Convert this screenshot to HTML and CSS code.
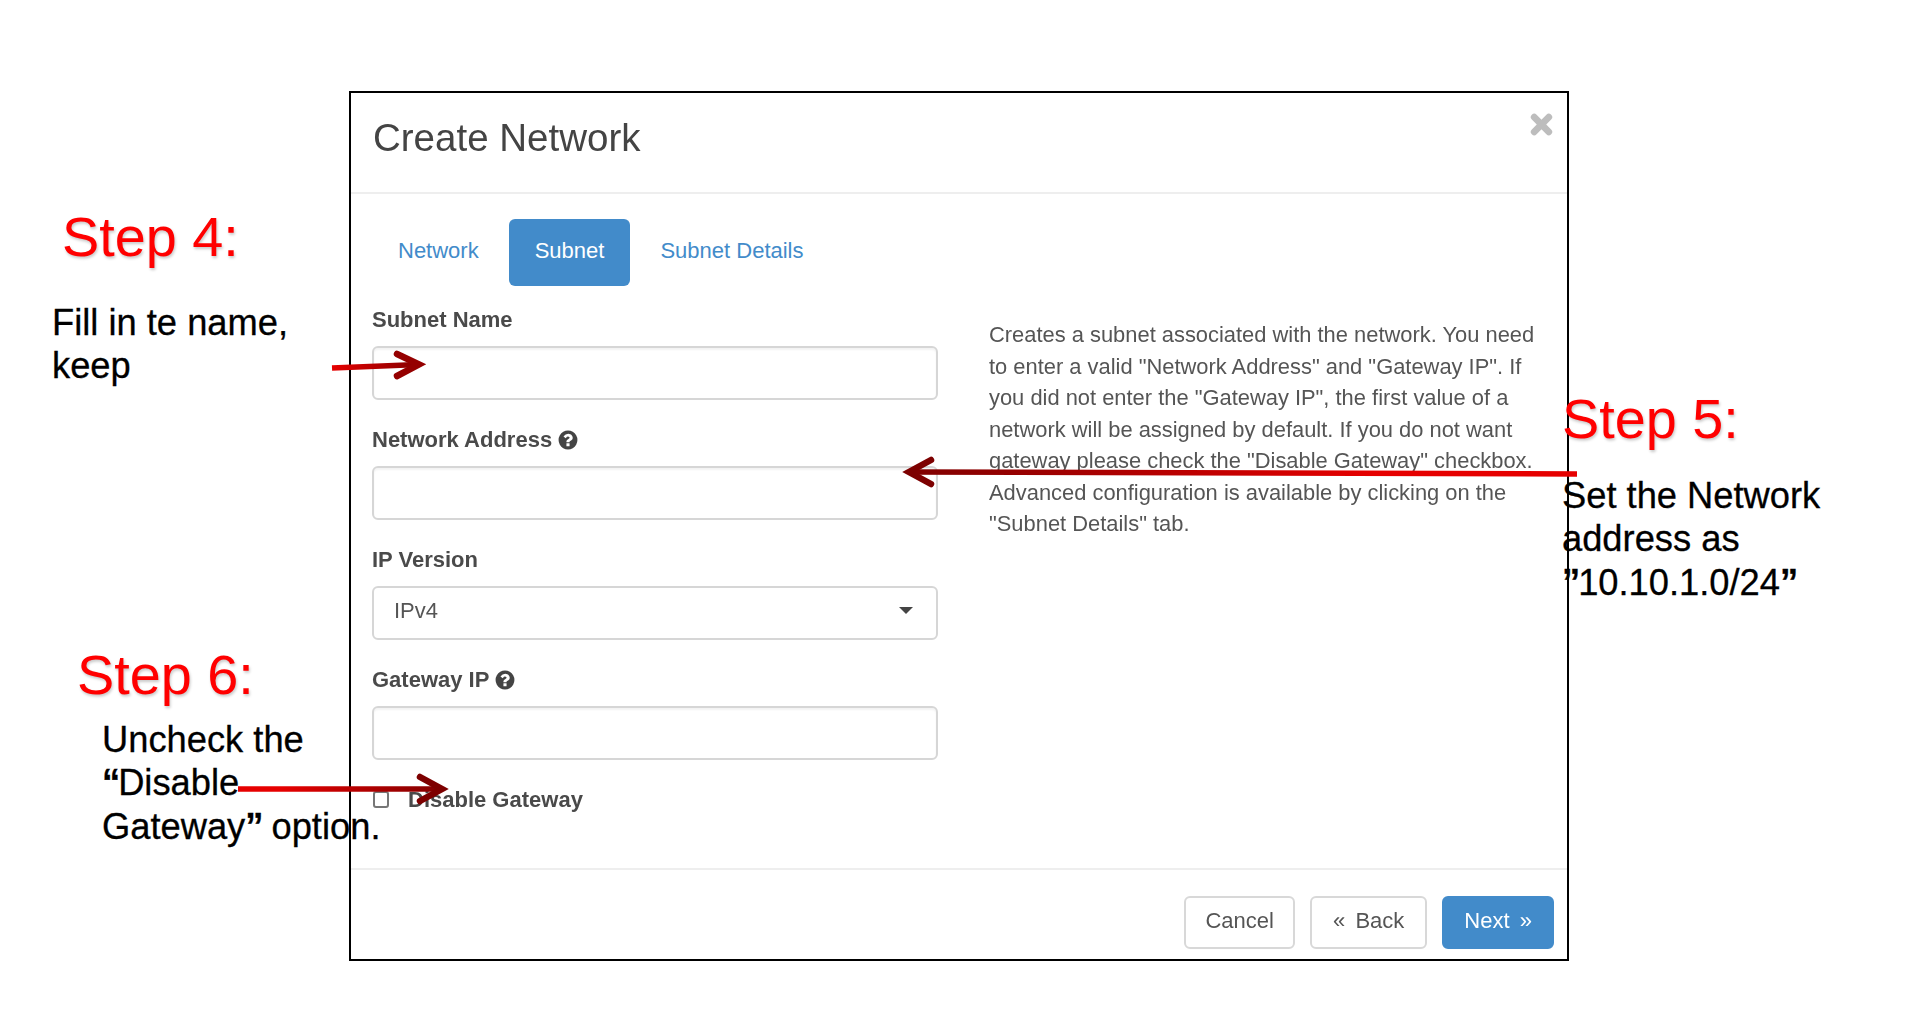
FILE: index.html
```html
<!DOCTYPE html>
<html lang="en">
<head>
<meta charset="utf-8">
<title>Create Network</title>
<link rel="stylesheet" href="styles.css">
</head>
<body>
<main class="stage">
  <section class="modal">
    <header class="modal-header">
      <h1 class="modal-title">Create Network</h1>
      <svg class="close-icon" viewBox="0 0 24 24" aria-hidden="true"><path d="M5 5 19 19M19 5 5 19"/></svg>
    </header>
    <div class="modal-body">
      <nav class="tabs">
        <a class="tab">Network</a>
        <a class="tab tab-active">Subnet</a>
        <a class="tab">Subnet Details</a>
      </nav>
      <div class="form-grid">
        <form class="fields">
          <div class="field">
            <label class="field-label">Subnet Name</label>
            <input class="control" type="text">
          </div>
          <div class="field">
            <label class="field-label">Network Address
              <svg class="help-icon" viewBox="0 0 1792 1792" aria-hidden="true"><path d="M1024 1376v-192q0-14-9-23t-23-9h-192q-14 0-23 9t-9 23v192q0 14 9 23t23 9h192q14 0 23-9t9-23zm256-672q0-88-55.5-163t-138.5-116-170-41q-243 0-371 213-15 24 8 42l132 100q7 6 19 6 16 0 25-12 53-68 86-92 34-24 86-24 48 0 85.5 26t37.5 59q0 38-20 61t-68 45q-63 28-115.5 86.5t-52.5 125.5v36q0 14 9 23t23 9h192q14 0 23-9t9-23q0-19 21.5-49.5t54.5-49.5q32-18 49-28.5t46-35 44.5-48 28-60.5 12.5-81zm384 192q0 209-103 385.5t-279.5 279.5-385.5 103-385.5-103-279.5-279.5-103-385.5 103-385.5 279.5-279.5 385.5-103 385.5 103 279.5 279.5 103 385.5z"/></svg>
            </label>
            <input class="control" type="text">
          </div>
          <div class="field">
            <label class="field-label">IP Version</label>
            <div class="select-wrap">
              <select class="control control-select"><option>IPv4</option></select>
              <span class="caret"></span>
            </div>
          </div>
          <div class="field">
            <label class="field-label">Gateway IP
              <svg class="help-icon" viewBox="0 0 1792 1792" aria-hidden="true"><path d="M1024 1376v-192q0-14-9-23t-23-9h-192q-14 0-23 9t-9 23v192q0 14 9 23t23 9h192q14 0 23-9t9-23zm256-672q0-88-55.5-163t-138.5-116-170-41q-243 0-371 213-15 24 8 42l132 100q7 6 19 6 16 0 25-12 53-68 86-92 34-24 86-24 48 0 85.5 26t37.5 59q0 38-20 61t-68 45q-63 28-115.5 86.5t-52.5 125.5v36q0 14 9 23t23 9h192q14 0 23-9t9-23q0-19 21.5-49.5t54.5-49.5q32-18 49-28.5t46-35 44.5-48 28-60.5 12.5-81zm384 192q0 209-103 385.5t-279.5 279.5-385.5 103-385.5-103-279.5-279.5-103-385.5 103-385.5 279.5-279.5 385.5-103 385.5 103 279.5 279.5 103 385.5z"/></svg>
            </label>
            <input class="control" type="text">
          </div>
          <label class="check-row">
            <span class="check-box"></span>
            <span>Disable Gateway</span>
          </label>
        </form>
        <p class="description">Creates a subnet associated with the network. You need to enter a valid "Network Address" and "Gateway IP". If you did not enter the "Gateway IP", the first value of a network will be assigned by default. If you do not want gateway please check the "Disable Gateway" checkbox. Advanced configuration is available by clicking on the "Subnet Details" tab.</p>
      </div>
    </div>
    <footer class="modal-footer">
      <button class="btn btn-cancel" type="button">Cancel</button>
      <button class="btn btn-back" type="button">«&nbsp; Back</button>
      <button class="btn btn-primary" type="button">Next &nbsp;»</button>
    </footer>
  </section>

  <div class="note note-4">
    <h2 class="step-title">Step 4:</h2>
    <p class="step-text">Fill in te name,<br>keep</p>
  </div>
  <div class="note note-5">
    <h2 class="step-title">Step 5:</h2>
    <p class="step-text">Set the Network<br>address as<br><b>”</b>10.10.1.0/24<b>”</b></p>
  </div>
  <h2 class="step-title note note-6-title">Step 6:</h2>
  <p class="step-text note note-6-text">Uncheck the<br><b>“</b>Disable<br>Gateway<b>”</b> option.</p>

  <svg class="arrows" viewBox="0 0 1917 1010" aria-hidden="true">
    <defs>
      <linearGradient id="toRight1" gradientUnits="userSpaceOnUse" x1="332" y1="0" x2="426" y2="0"><stop offset="0" stop-color="#e60000"/><stop offset="1" stop-color="#7d0000"/></linearGradient>
      <linearGradient id="toLeft" gradientUnits="userSpaceOnUse" x1="1577" y1="0" x2="902" y2="0"><stop offset="0.3" stop-color="#e60000"/><stop offset="1" stop-color="#7d0000"/></linearGradient>
      <linearGradient id="toRight2" gradientUnits="userSpaceOnUse" x1="238" y1="0" x2="449" y2="0"><stop offset="0.2" stop-color="#e60000"/><stop offset="1" stop-color="#7d0000"/></linearGradient>
    </defs>
    <path class="arrow-line" stroke="url(#toRight1)" d="M332 368 419 364.5"/>
    <path class="arrow-head" stroke="#950000" d="M397 354 419 364.5 397 376"/>
    <path class="arrow-line" stroke="url(#toLeft)" d="M1577 474 909 472"/>
    <path class="arrow-head" stroke="#7d0000" d="M931 460 909 472 931 484"/>
    <path class="arrow-line" stroke="url(#toRight2)" d="M238 789 441 789"/>
    <path class="arrow-head" stroke="#7d0000" d="M420 777 442 789 420 801"/>
  </svg>
</main>
</body>
</html>
```
FILE: styles.css
```css
* { box-sizing: border-box; }
html, body { margin: 0; padding: 0; background: #fff; }
body {
  font-family: "Liberation Sans", Arial, sans-serif;
  overflow: hidden;
}
.stage {
  position: relative;
  width: 1917px;
  height: 1010px;
  padding: 91px 0 0 349px;
}
.modal {
  width: 1220px;
  height: 870px;
  border: 2px solid #000;
  background: #fff;
  color: #555;
  font-size: 22px;
  position: relative;
}
.modal-header {
  height: 101px;
  padding: 22px 22px 0;
  border-bottom: 2px solid #eee;
}
.modal-title {
  margin: 0;
  font-size: 38.5px;
  line-height: 46px;
  font-weight: 400;
  color: #444;
  filter: blur(0.4px);
}
.close-icon {
  position: absolute;
  right: 13px;
  top: 19px;
  width: 25px;
  height: 25px;
  fill: none;
  stroke: #bdbdbd;
  stroke-width: 6.5;
  stroke-linecap: round;
  filter: blur(0.4px);
}
.modal-body {
  padding: 25px 21px 0;
  height: 676px;
  border-bottom: 2px solid #eee;
}
.tabs { display: flex; gap: 4px; height: 67px; }
.tab {
  display: block;
  padding: 16px 26px 0;
  line-height: 32px;
  color: #428bca;
  border-radius: 6px;
}
.tab-active { background: #428bca; color: #fff; }
.form-grid {
  display: grid;
  grid-template-columns: 566px 556px;
  column-gap: 51px;
  margin-top: 18px;
  filter: blur(0.4px);
}
.fields { margin: 0; }
.field { margin-bottom: 24px; }
.field-label {
  display: flex;
  align-items: center;
  gap: 5px;
  height: 32px;
  margin-bottom: 10px;
  font-weight: 700;
  color: #4a4a4a;
}
.help-icon { width: 22px; height: 22px; fill: #444; }
.control {
  display: block;
  width: 100%;
  height: 54px;
  padding: 0 20px;
  border: 2px solid #d6d6d6;
  border-radius: 6px;
  background: #fff;
  font: inherit;
  color: #555;
  box-shadow: inset 0 2px 2px rgba(0, 0, 0, 0.05);
}
.select-wrap { position: relative; }
.control-select {
  appearance: none;
  padding-bottom: 6px;
  box-shadow: none;
}
.caret {
  position: absolute;
  right: 25px;
  top: 21px;
  border-left: 7px solid transparent;
  border-right: 7px solid transparent;
  border-top: 7px solid #444;
}
.check-row {
  display: flex;
  align-items: center;
  gap: 19px;
  height: 32px;
  padding-left: 1px;
  font-weight: 700;
  color: #4a4a4a;
}
.check-box {
  width: 16px;
  height: 17px;
  margin-bottom: 2px;
  border: 2px solid #777;
  border-radius: 3px;
  background: #fff;
}
.description {
  margin: 0;
  padding-top: 15px;
  font-size: 21.9px;
  line-height: 31.5px;
  color: #555;
}
.modal-footer {
  display: flex;
  justify-content: flex-end;
  gap: 15px;
  padding: 26px 13px 0 0;
}
.btn {
  height: 53px;
  padding: 0 20px 3px;
  border: 2px solid #d8d8d8;
  border-radius: 6px;
  background: #fff;
  color: #555;
  font: inherit;
  word-spacing: -1px;
  filter: blur(0.4px);
}
.btn-cancel { padding: 0 19px 3px; }
.btn-back { padding: 0 21px 3px; }
.btn-primary { background: #428bca; border-color: #428bca; color: #fff; }

.note { position: absolute; margin: 0; }
.step-title {
  margin: 0;
  font-size: 55.8px;
  line-height: 64px;
  font-weight: 400;
  color: #f00;
  text-shadow: 1px 2px 3px rgba(0, 0, 0, 0.22);
}
.step-text {
  margin: 0;
  font-size: 36.3px;
  line-height: 43.4px;
  color: #000;
  -webkit-text-stroke: 0.3px #000;
}
.step-text b { letter-spacing: -2px; }
.note-4 { left: 62px; top: 205px; }
.note-4 .step-text { margin: 32px 0 0 -10px; }
.note-5 { left: 1562px; top: 387px; }
.note-5 .step-text { margin-top: 23px; }
.note-6-title { left: 77px; top: 643px; }
.note-6-text { left: 102px; top: 718px; }
.arrows {
  position: absolute;
  inset: 0;
  width: 1917px;
  height: 1010px;
  pointer-events: none;
  fill: none;
}
.arrow-line { stroke-width: 5.5; }
.arrow-head { stroke-width: 6.5; stroke-linecap: round; stroke-linejoin: miter; }
```
